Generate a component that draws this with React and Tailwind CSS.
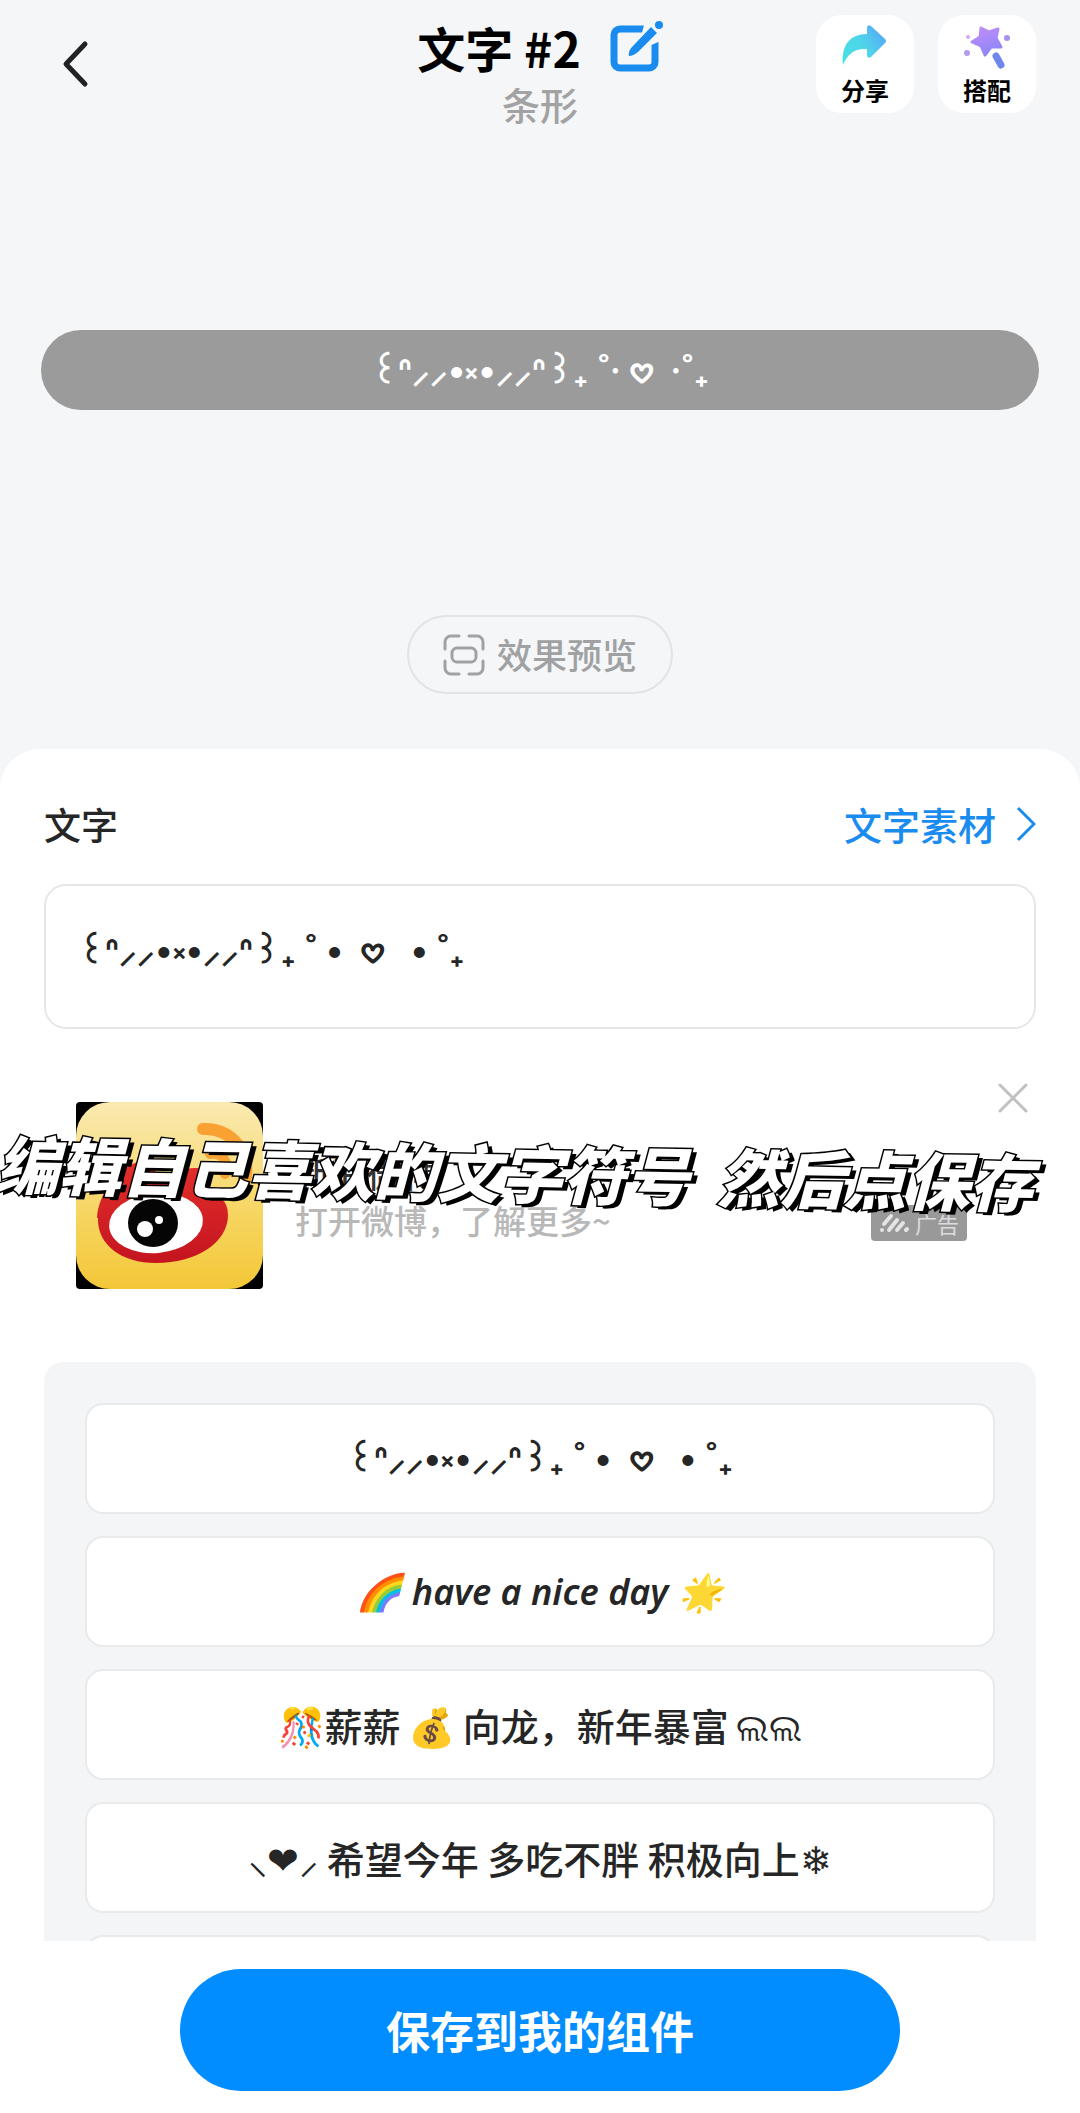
import { useState } from "react";

const KAOMOJI = "꒰ᐢ⸝⸝•༝•⸝⸝ᐢ꒱₊ ˚ •  𖹭   • ˚₊";

const PRESETS = [
  {
    id: 1,
    text: KAOMOJI,
    className: "font-['Inter','Noto_Sans_CJK_SC',sans-serif] text-[35px] font-semibold",
  },
  {
    id: 2,
    text: "🌈 have a nice day 🌟",
    className: "font-['Noto_Sans',sans-serif] text-[36px] font-semibold italic",
  },
  {
    id: 3,
    text: "🎊薪薪\u2009💰\u2009向龙，新年暴富\u2009ଲଲ",
    className: "text-[38px] font-medium",
  },
  {
    id: 4,
    text: "⸜❤︎⸝ 希望今年 多吃不胖 积极向上❄︎",
    className: "text-[38px] font-medium",
  },
  { id: 5, text: "", className: "text-[38px]" },
];

const BackIcon = () => (
  <svg width="32" height="48" viewBox="0 0 32 48" fill="none">
    <path
      d="M25 4 6 24l19 20"
      stroke="#222"
      strokeWidth="5"
      strokeLinecap="round"
      strokeLinejoin="round"
    />
  </svg>
);

const EditIcon = () => (
  <svg width="54" height="54" viewBox="0 0 54 54" fill="none">
    <path
      d="M37 9H11a6 6 0 0 0-6 6v27a6 6 0 0 0 6 6h29a6 6 0 0 0 6-6V20"
      stroke="#1a8cf0"
      strokeWidth="7"
    />
    <path d="M36 1 54 1 54 20 40 26 32 17Z" fill="#f5f6f8" />
    <path d="M42 7 48 13 29 32Q24 36 20 36Q19 31 23 27Z" fill="#1a8cf0" />
    <circle cx="50" cy="5" r="4" fill="#1a8cf0" />
  </svg>
);

const ShareIcon = () => (
  <svg width="48" height="44" viewBox="0 0 48 44">
    <defs>
      <linearGradient id="share" x1="0" y1="1" x2="1" y2="0.4">
        <stop offset="0" stopColor="#45e3e0" />
        <stop offset="0.6" stopColor="#4fd3ea" />
        <stop offset="1" stopColor="#55aef5" />
      </linearGradient>
    </defs>
    <path
      d="M2 42C0 22 9 11 26 11V5q0-4 4-2l14 13q2 2 0 4L30 34q-4 2-4-2v-6C14 25 7 30 2 42z"
      fill="url(#share)"
    />
  </svg>
);

const WandIcon = () => (
  <svg width="50" height="48" viewBox="0 0 50 48">
    <defs>
      <linearGradient id="wand" x1="0.3" y1="0" x2="0.7" y2="1">
        <stop offset="0" stopColor="#bd8cf8" />
        <stop offset="1" stopColor="#8b86f6" />
      </linearGradient>
    </defs>
    <path
      d="M19 5l8 4 9-3-2 9 5 9-10 0-6 8-4-9-9-4 8-5z"
      fill="url(#wand)"
      stroke="url(#wand)"
      strokeWidth="3"
      strokeLinejoin="round"
    />
    <path d="M34 33l5 9" stroke="#6f86ee" strokeWidth="7" strokeLinecap="round" />
    <circle cx="6" cy="14" r="2" fill="#d9a5ee" />
    <circle cx="45" cy="15" r="3" fill="#a890f0" />
    <circle cx="5" cy="30" r="3" fill="#b49bf0" />
  </svg>
);

const PreviewIcon = () => (
  <svg
    width="42"
    height="42"
    viewBox="0 0 42 42"
    fill="none"
    stroke="#a0a1a2"
    strokeWidth="3"
    strokeLinecap="round"
  >
    <path d="M2 15V8a6 6 0 0 1 6-6h8M26 2h8a6 6 0 0 1 6 6v7M40 27v7a6 6 0 0 1-6 6h-8M16 40H8a6 6 0 0 1-6-6v-7" />
    <rect x="9" y="14" width="24" height="14" rx="5" />
  </svg>
);

const WeiboLogo = () => (
  <svg width="187" height="187" viewBox="0 0 187 187" className="shrink-0">
    <defs>
      <linearGradient id="weibo" x1="0" y1="0" x2="0" y2="1">
        <stop offset="0" stopColor="#faeab2" />
        <stop offset="0.6" stopColor="#f6d560" />
        <stop offset="1" stopColor="#f4c738" />
      </linearGradient>
      <linearGradient id="weiboRed" x1="0" y1="0" x2="0" y2="1">
        <stop offset="0" stopColor="#e3302c" />
        <stop offset="1" stopColor="#c4141f" />
      </linearGradient>
    </defs>
    <rect width="187" height="187" rx="4" fill="#000" />
    <rect width="187" height="187" rx="34" fill="url(#weibo)" />
    <path
      d="M127 27C155 25 178 52 168 82"
      stroke="#f9a233"
      strokeWidth="12"
      strokeLinecap="round"
      fill="none"
    />
    <path
      d="M134 52C146 50 154 60 149 72"
      stroke="#f9a233"
      strokeWidth="10"
      strokeLinecap="round"
      fill="none"
    />
    <path
      d="M21 116C22 92 42 66 62 60c14-4 20 4 17 18 22-10 46-18 52-6 3 6 0 12-1 17 14 4 22 10 22 24 0 28-32 48-72 48-34 0-59-18-58-45z"
      fill="url(#weiboRed)"
    />
    <ellipse cx="80" cy="121" rx="47" ry="30" transform="rotate(-5 80 121)" fill="#fff" />
    <ellipse cx="77" cy="121" rx="25" ry="24" fill="#050505" />
    <circle cx="69" cy="127" r="8" fill="#fff" />
    <circle cx="83" cy="118" r="4" fill="#fff" />
  </svg>
);

const AdMark = () => (
  <svg
    width="32"
    height="20"
    viewBox="0 0 32 20"
    fill="none"
    stroke="#e4e4e4"
    strokeWidth="4"
    strokeLinecap="round"
  >
    <path d="M3 17v0M5 11 12 3M10 17 18 7M18 17l6-7M27 17l1-1" />
  </svg>
);

const AdCard = () => (
  <section className="relative mx-11 flex h-[333px] gap-8 px-8 pt-[73px]">
    <WeiboLogo />
    <div className="flex flex-1 flex-col pt-[46px] leading-[48px]">
      <h3 className="text-[36px] font-medium text-[#333]">新浪微博</h3>
      <p className="text-[33px] font-medium text-[#b8b8b8]">打开微博，了解更多~</p>
    </div>
    <span className="mr-[37px] mt-[103px] flex h-9 items-center gap-1 self-start rounded-sm bg-[#999] px-2 text-[22px] text-[#dcdcdc]">
      <AdMark />
      广告
    </span>
    <button type="button" aria-label="关闭" className="absolute right-2 top-[54px]">
      <svg width="30" height="30" viewBox="0 0 30 30" stroke="#c0c0c0" strokeWidth="3" strokeLinecap="round">
        <path d="M2 2l26 26M28 2 2 28" />
      </svg>
    </button>
    <p className="pointer-events-none absolute -left-12 top-[88px] origin-left rotate-1 whitespace-pre text-[63px] font-black italic leading-[90px] text-white [-webkit-text-stroke:3px_#000] [paint-order:stroke_fill] [text-shadow:5px_3px_0_#000]">
      编辑自己喜欢的文字符号{"  "}然后点保存
    </p>
  </section>
);

const App = () => {
  const [text, setText] = useState(KAOMOJI);

  return (
    <div className="flex h-screen flex-col overflow-hidden bg-[#f5f6f8] font-['Noto_Sans_CJK_SC','Noto_Sans',sans-serif] text-[#262626]">
      <header className="grid grid-cols-[1fr_auto_1fr] items-start px-11 pt-[15px]">
        <button type="button" aria-label="返回" className="mt-[25px] justify-self-start pl-4">
          <BackIcon />
        </button>
        <div className="flex flex-col items-center">
          <h1 className="flex items-center gap-7 text-[48px] font-bold leading-[64px] text-black">
            文字 #2
            <button type="button" aria-label="编辑名称">
              <EditIcon />
            </button>
          </h1>
          <p className="text-[38px] font-medium leading-[50px] text-[#a2a2a2]">条形</p>
        </div>
        <div className="flex gap-6 justify-self-end text-[24px] font-bold leading-[30px] text-black">
          <button type="button" className="flex h-[98px] w-[98px] flex-col items-center gap-2 rounded-[26px] bg-white pt-2">
            <ShareIcon />
            <span>分享</span>
          </button>
          <button type="button" className="flex h-[98px] w-[98px] flex-col items-center gap-1 rounded-[26px] bg-white pt-2">
            <WandIcon />
            <span>搭配</span>
          </button>
        </div>
      </header>

      <section className="flex flex-col items-center px-[41px] pb-[55px] pt-[201px]">
        <div className="flex h-20 w-full items-center justify-center whitespace-pre rounded-full bg-[#9b9b9c] font-['Inter','Noto_Sans_CJK_SC',sans-serif] text-[35px] font-semibold text-white">
          ꒰ᐢ⸝⸝•༝•⸝⸝ᐢ꒱₊ ˚‧ 𖹭  ‧˚₊
        </div>
        <button
          type="button"
          className="mt-[205px] flex h-[79px] items-center gap-3 rounded-full border-2 border-[#e2e3e4] px-[34px] text-[35px] font-medium text-[#a0a1a2]"
        >
          <PreviewIcon />
          效果预览
        </button>
      </section>

      <main className="flex min-h-0 flex-1 flex-col rounded-t-[40px] bg-white">
        <div className="flex items-center justify-between px-11 pt-[47px] leading-[56px]">
          <label htmlFor="widget-text" className="text-[37px] font-medium">
            文字
          </label>
          <a href="#materials" className="flex items-center gap-5 text-[38px] font-medium text-[#1a8cf0]">
            文字素材
            <svg width="20" height="36" viewBox="0 0 20 36" fill="none" stroke="#1a8cf0" strokeWidth="3">
              <path d="M2 2l16 16L2 34" />
            </svg>
          </a>
        </div>
        <textarea
          id="widget-text"
          value={text}
          onChange={(e) => setText(e.target.value)}
          className="mx-11 mt-8 h-[145px] shrink-0 resize-none rounded-[22px] border-2 border-[#e6e6e6] px-8 py-10 font-['Inter','Noto_Sans_CJK_SC',sans-serif] text-[35px] font-semibold leading-[48px] outline-none"
        />

        <AdCard />

        <div className="mx-11 min-h-0 flex-1 overflow-y-auto rounded-t-[20px] bg-[#f4f5f7] px-[41px] pt-[41px] [scrollbar-width:none]">
          <ul className="flex flex-col gap-[22px]">
            {PRESETS.map((p) => (
              <li key={p.id}>
                <button
                  type="button"
                  aria-label={p.text || "更多"}
                  onClick={() => setText(p.text)}
                  className="flex h-[111px] w-full items-center justify-center rounded-[18px] border-2 border-[#e9eaeb] bg-white"
                >
                  <span className={`whitespace-pre ${p.className}`}>{p.text}</span>
                </button>
              </li>
            ))}
          </ul>
        </div>

        <footer className="flex justify-center pb-[22px] pt-7">
          <button
            type="button"
            className="h-[122px] w-2/3 rounded-full bg-[#018dff] text-[44px] font-bold text-white"
          >
            保存到我的组件
          </button>
        </footer>
      </main>
    </div>
  );
};

export default App;
